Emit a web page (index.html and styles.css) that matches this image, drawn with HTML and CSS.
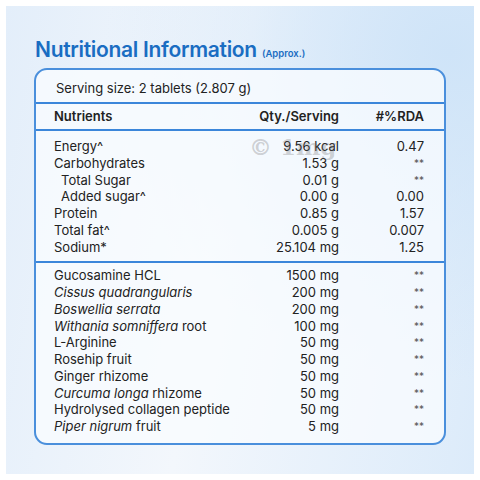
FILE: index.html
```html
<!DOCTYPE html>
<html lang="en">
<head>
  <meta charset="UTF-8" />
  <title>Nutritional Information</title>
  <link rel="stylesheet" href="styles.css">
</head>
<body>
  <div class="panel">
    <h1 class="title">Nutritional Information <span class="approx">(Approx.)</span></h1>

    <div class="card">
      <div class="serving">Serving size: 2 tablets (2.807 g)</div>

      <div class="row head">
        <span>Nutrients</span>
        <span class="qty">Qty./Serving</span>
        <span class="rda">#%RDA</span>
      </div>

      <div class="section first">
        <span class="mark">© 1mg</span>
        <div class="row"><span>Energy^</span><span class="qty">9.56 kcal</span><span class="rda">0.47</span></div>
        <div class="row"><span>Carbohydrates</span><span class="qty">1.53 g</span><span class="rda star">**</span></div>
        <div class="row"><span class="sub">Total Sugar</span><span class="qty">0.01 g</span><span class="rda star">**</span></div>
        <div class="row"><span class="sub">Added sugar^</span><span class="qty">0.00 g</span><span class="rda">0.00</span></div>
        <div class="row"><span>Protein</span><span class="qty">0.85 g</span><span class="rda">1.57</span></div>
        <div class="row"><span>Total fat^</span><span class="qty">0.005 g</span><span class="rda">0.007</span></div>
        <div class="row"><span>Sodium*</span><span class="qty">25.104 mg</span><span class="rda">1.25</span></div>
      </div>

      <div class="section second">
        <div class="row"><span>Gucosamine HCL</span><span class="qty">1500 mg</span><span class="rda star">**</span></div>
        <div class="row"><span><i>Cissus quadrangularis</i></span><span class="qty">200 mg</span><span class="rda star">**</span></div>
        <div class="row"><span><i>Boswellia serrata</i></span><span class="qty">200 mg</span><span class="rda star">**</span></div>
        <div class="row"><span><i>Withania somniffera</i> root</span><span class="qty">100 mg</span><span class="rda star">**</span></div>
        <div class="row"><span>L-Arginine</span><span class="qty">50 mg</span><span class="rda star">**</span></div>
        <div class="row"><span>Rosehip fruit</span><span class="qty">50 mg</span><span class="rda star">**</span></div>
        <div class="row"><span>Ginger rhizome</span><span class="qty">50 mg</span><span class="rda star">**</span></div>
        <div class="row"><span><i>Curcuma longa</i> rhizome</span><span class="qty">50 mg</span><span class="rda star">**</span></div>
        <div class="row"><span>Hydrolysed collagen peptide</span><span class="qty">50 mg</span><span class="rda star">**</span></div>
        <div class="row"><span><i>Piper nigrum</i> fruit</span><span class="qty">5 mg</span><span class="rda star">**</span></div>
      </div>
    </div>
  </div>
</body>
</html>
```

FILE: styles.css
```css
body {
  margin: 0;
  background: white;
  font-family: Inter, "Noto Sans", sans-serif;
  color: #222;
}

.panel {
  margin: 6px;
  height: 468px;
  box-sizing: border-box;
  padding: 31px 28px 0 28px;
  background:
    radial-gradient(ellipse at 95% 10%, #cfe4f8 0%, rgba(207, 228, 248, 0) 55%),
    linear-gradient(100deg, #e3eefa 0%, #f3f7fc 45%, #dcebfa 100%);
}

.title {
  margin: 0 0 1px 1px;
  font-size: 21px;
  font-weight: 600;
  letter-spacing: -0.3px;
  color: #1a6dc2;
  line-height: 26px;
}

.approx {
  font-size: 9.5px;
  font-weight: 600;
  letter-spacing: 0;
}

.card {
  border: 2px solid #4a8fdc;
  border-radius: 13px;
  background: rgba(250, 252, 255, 0.75);
  overflow: hidden;
}

.serving {
  padding: 0 20px;
  height: 32px;
  line-height: 37px;
  font-size: 13px;
  border-bottom: 2px solid #3b86da;
}

.row {
  display: grid;
  grid-template-columns: 1fr auto 85px;
  padding: 0 20px 0 18px;
  font-size: 13px;
  line-height: 16.75px;
  white-space: nowrap;
}

.qty, .rda {
  text-align: right;
}

.head {
  font-weight: 600;
  line-height: 25px;
  border-bottom: 2px solid #3b86da;
}

.sub {
  padding-left: 7px;
}

.star {
  font-size: 10px;
  color: #555;
}

.section {
  position: relative;
}

.first {
  padding: 7px 0 6px;
  border-bottom: 2px solid #3b86da;
}

.second {
  padding: 4px 0 8px;
}

.mark {
  position: absolute;
  left: 213px;
  top: 2px;
  font-family: "DejaVu Serif", serif;
  font-size: 23px;
  font-weight: bold;
  color: rgba(110, 110, 110, 0.3);
}
```
